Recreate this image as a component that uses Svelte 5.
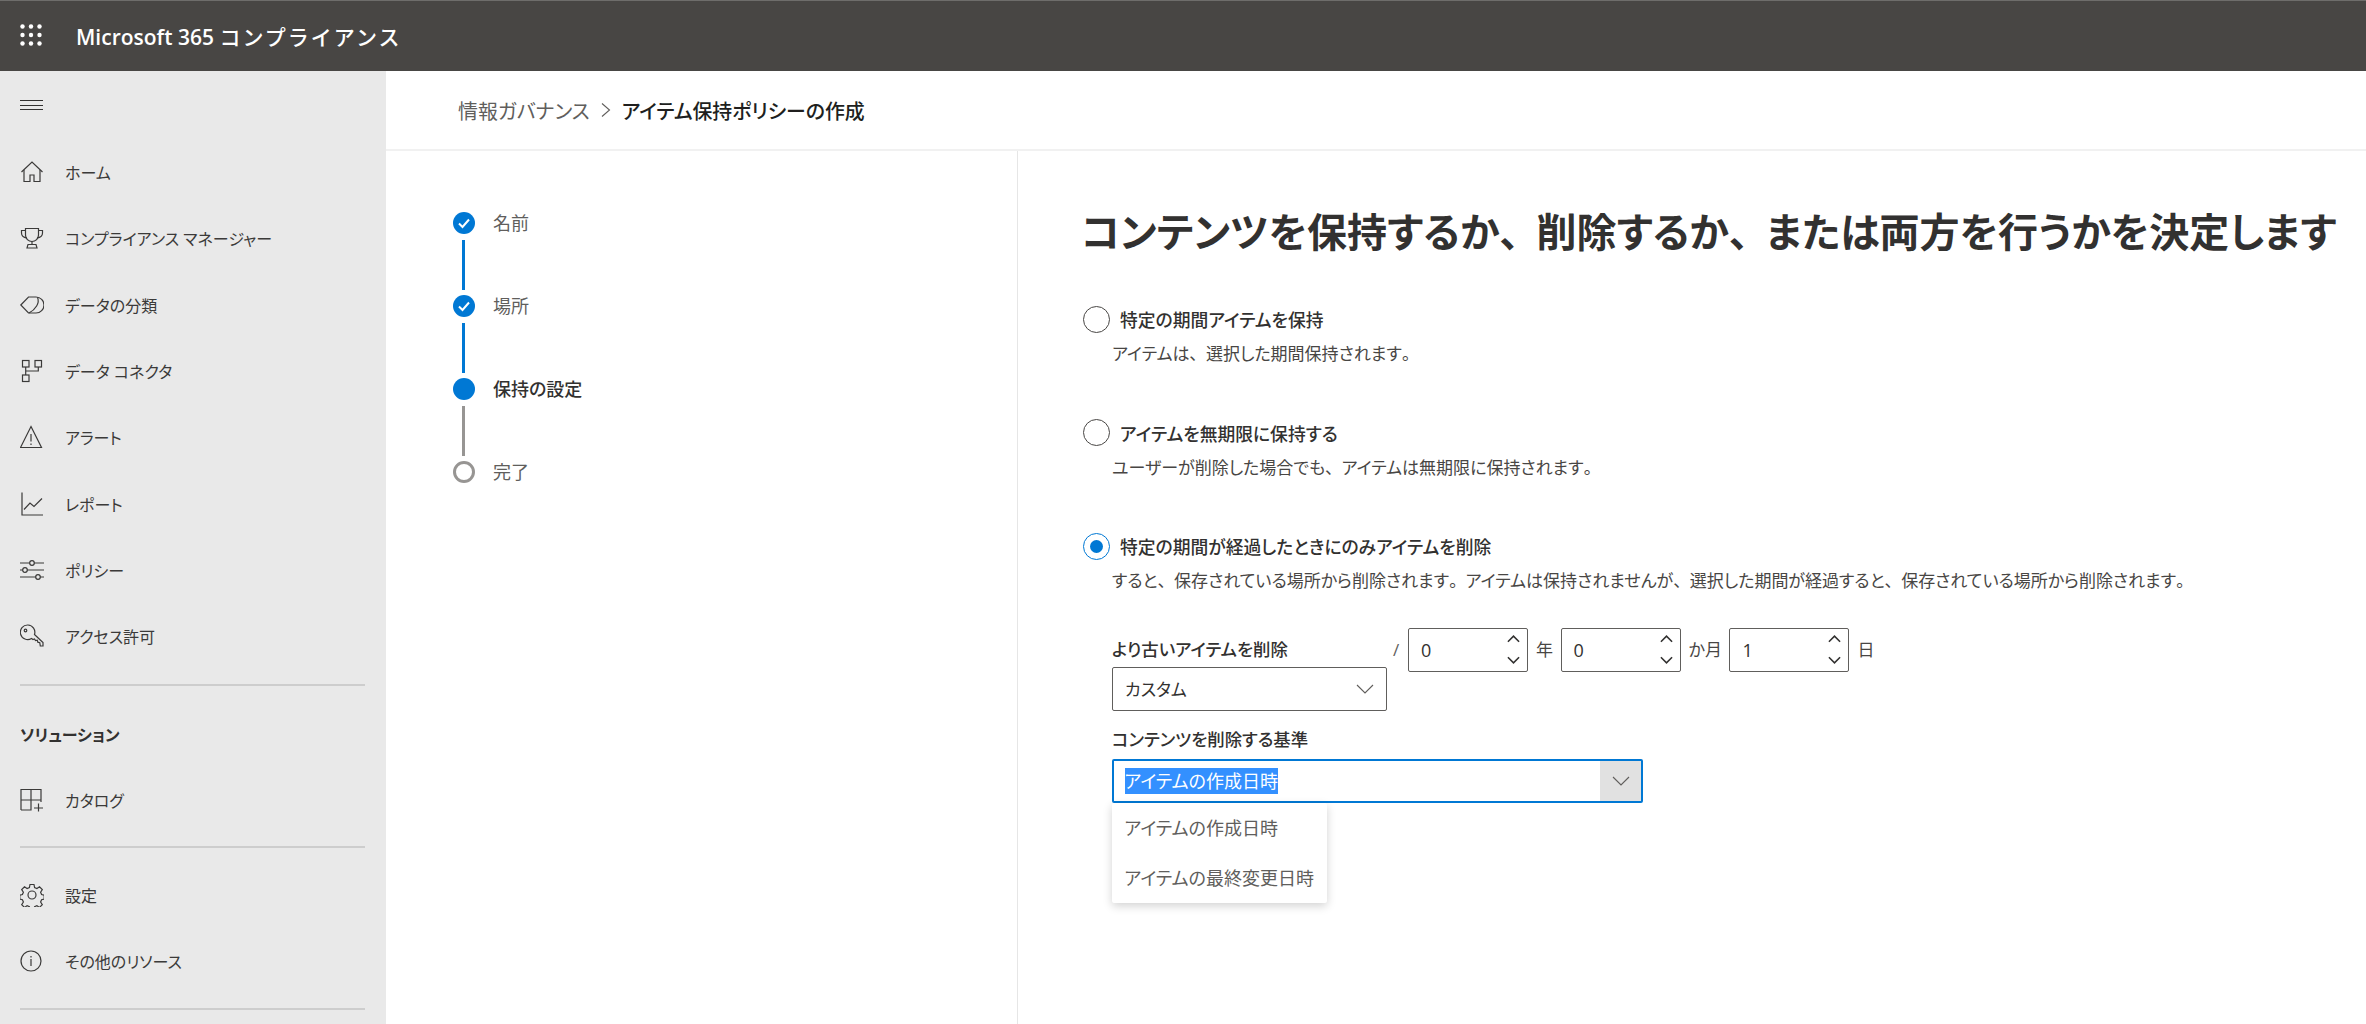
<script>
  const stroke = 'currentColor';
  const nav1 = [
    { label: 'ホーム', icon: 'home' },
    { label: 'コンプライアンス マネージャー', icon: 'trophy' },
    { label: 'データの分類', icon: 'tag' },
    { label: 'データ コネクタ', icon: 'conn' },
    { label: 'アラート', icon: 'alert' },
    { label: 'レポート', icon: 'chart' },
    { label: 'ポリシー', icon: 'sliders' },
    { label: 'アクセス許可', icon: 'key' }
  ];
  const nav2 = [{ label: '設定', icon: 'gear' }, { label: 'その他のリソース', icon: 'info' }];
  const steps = [
    { label: '名前', state: 'done' },
    { label: '場所', state: 'done' },
    { label: '保持の設定', state: 'current' },
    { label: '完了', state: 'todo' }
  ];
  const options = [
    { title: '特定の期間アイテムを保持', desc: 'アイテムは、選択した期間保持されます。', on: false },
    { title: 'アイテムを無期限に保持する', desc: 'ユーザーが削除した場合でも、アイテムは無期限に保持されます。', on: false },
    { title: '特定の期間が経過したときにのみアイテムを削除', desc: 'すると、保存されている場所から削除されます。アイテムは保持されませんが、選択した期間が経過すると、保存されている場所から削除されます。', on: true }
  ];
  const spins = [
    { v: '0', unit: '年' },
    { v: '0', unit: 'か月' },
    { v: '1', unit: '日' }
  ];
  const marks = (t) => t.split(/([、。])/).filter(Boolean);
  const isMark = (p) => p === '、' || p === '。';
</script>

{#snippet icon(name)}
  <svg class="ico" width="24" height="24" viewBox="0 0 24 24" fill="none" stroke={stroke} stroke-width="1.2">
    {#if name === 'home'}
      <path d="M1.500 12 12 2l10.500 10" /><path d="M4 10v11.500h6V15h4v6.500h6V10" />
    {:else if name === 'trophy'}
      <path d="M5.500 2.500h13v6.500a6.500 6.500 0 0 1-13 0z" /><path d="M5.500 4.500H1.500v2.500c0 2.500 2 4.500 5.500 5M18.500 4.500h4v2.500c0 2.500-2 4.500-5.500 5" /><path d="M12 15.500v3M8 18.500h8l1 3.500H7z" />
    {:else if name === 'tag'}
      <path d="M.8 12 8.500 4H16a8 8 0 0 1 0 16H8.500z" /><path d="M17.500 4.200C20 10 15.500 16.500 9 20" />
    {:else if name === 'conn'}
      <rect x="2.500" y="1.500" width="6.500" height="6.500" /><rect x="15" y="1.500" width="6.500" height="6.500" /><rect x="2.500" y="16" width="6.500" height="6.500" /><path d="M5.700 8v8M5.700 12h12.600V8" />
    {:else if name === 'alert'}
      <path d="M11 1.500 21.500 22.500H.5z" /><path d="M11 9v7.500M11 18.500v1.500" />
    {:else if name === 'chart'}
      <path d="M2 .500V23h21" /><path d="M4 17.500l6-6.500 4 3.500 8-8" />
    {:else if name === 'sliders'}
      <path d="M0 5h24M0 12h24M0 19h24" /><circle cx="12" cy="5" r="2.300" fill="#e9e9e9" /><circle cx="5" cy="12" r="2.300" fill="#e9e9e9" /><circle cx="18" cy="19" r="2.300" fill="#e9e9e9" />
    {:else if name === 'key'}
      <path d="M8 1a7.300 7.300 0 1 0 3.500 13.500l1.500 1 1.500-.500 1 1.500 1.800-.300.500 2 2 .500.500 3.300h2.700v-3.500l-8.500-8A7.300 7.300 0 0 0 8 1z" /><circle cx="5.500" cy="6.500" r="1.300" />
    {:else if name === 'grid'}
      <path d="M1 22V1.500h20V14M11 1.500V22H1M1 12h20M14 20h9M18.500 15.500v8" />
    {:else if name === 'gear'}
      <path d="M10 1.500h4l.6 3 2.300 1 2.600-1.700 2.800 2.800-1.700 2.600 1 2.300 2.600.6v4l-2.600.6-1 2.300 1.700 2.600-2.800 2.800-2.600-1.700-2.300 1-.6 2.600h-4l-.6-2.600-2.300-1-2.600 1.700-2.800-2.800 1.700-2.600-1-2.300-2.600-.6v-4l2.600-.6 1-2.300L1.700 6.600l2.800-2.800 2.600 1.700 2.300-1z" /><circle cx="12" cy="12" r="4" />
    {:else if name === 'info'}
      <circle cx="11" cy="12" r="10" /><path d="M11 10v7M11 7v1.500" />
    {/if}
  </svg>
{/snippet}

{#snippet text(t)}{#each marks(t) as p}{#if isMark(p)}<span class="mark">{p}</span>{:else}{p}{/if}{/each}{/snippet}

<div class="page">
  <header class="top">
    <svg class="waffle" width="22" height="22" viewBox="0 0 22 22" fill="#fff">
      {#each [2.500, 11, 19.500] as y}{#each [2.500, 11, 19.500] as x}<circle cx={x} cy={y} r="2.200" />{/each}{/each}
    </svg>
    <span class="brand">Microsoft 365 <span class="kana">コンプライアンス</span></span>
  </header>

  <div class="shell">
    <nav class="side">
      <div class="burger"><span></span><span></span><span></span></div>
      {#each nav1 as n}
        <div class="nav">{@render icon(n.icon)}<span>{n.label}</span></div>
      {/each}
      <hr class="rule first" />
      <div class="section">ソリューション</div>
      <div class="nav">{@render icon('grid')}<span>カタログ</span></div>
      <hr class="rule" />
      {#each nav2 as n}
        <div class="nav">{@render icon(n.icon)}<span>{n.label}</span></div>
      {/each}
      <hr class="rule last" />
    </nav>

    <div class="main">
      <div class="crumbs">
        <span class="c1">情報ガバナンス</span>
        <svg width="12" height="16" viewBox="0 0 12 16" fill="none" stroke="#605e5c" stroke-width="1.100"><path d="M2 1.500 9.500 8 2 14.500" /></svg>
        <span class="c2">アイテム保持ポリシーの作成</span>
      </div>

      <div class="cols">
        <aside class="wizard">
          {#each steps as s, i}
            <div class="step">
              <div class="track">
                <span class="dot {s.state}">
                  {#if s.state === 'done'}
                    <svg width="14" height="12" viewBox="0 0 14 12" fill="none" stroke="#fff" stroke-width="2"><path d="M2 6.500 5.500 10 12 2.500" /></svg>
                  {/if}
                </span>
                {#if i < steps.length - 1}
                  <span class="line" class:blue={s.state === 'done'}></span>
                {/if}
              </div>
              <span class="slabel" class:active={s.state === 'current'}>{s.label}</span>
            </div>
          {/each}
        </aside>

        <section class="form">
          <h1>{@render text('コンテンツを保持するか、削除するか、または両方を行うかを決定します')}</h1>

          {#each options as o}
            <div class="opt">
              <div class="optrow">
                <span class="radio" class:on={o.on}></span>
                <span class="otitle">{o.title}</span>
              </div>
              <p class="odesc">{@render text(o.desc)}</p>
            </div>
          {/each}

          <div class="details">
            <div class="retain">
              <div class="retain-left">
                <div class="flabel">より古いアイテムを削除</div>
                <div class="select">
                  <span>カスタム</span>
                  <svg width="18" height="10" viewBox="0 0 18 10" fill="none" stroke="#605e5c" stroke-width="1.100"><path d="M1 1l8 8 8-8" /></svg>
                </div>
              </div>
              <span class="slash">/</span>
              {#each spins as sp}
                <div class="spin">
                  <span>{sp.v}</span>
                  <div class="arrows">
                    <svg width="13" height="8" viewBox="0 0 14 8" fill="none" stroke="#323130" stroke-width="1.700"><path d="M1 7l6-6 6 6" /></svg>
                    <svg width="13" height="8" viewBox="0 0 14 8" fill="none" stroke="#323130" stroke-width="1.700"><path d="M1 1l6 6 6-6" /></svg>
                  </div>
                </div>
                <span class="unit">{sp.unit}</span>
              {/each}
            </div>

            <div class="flabel second">コンテンツを削除する基準</div>
            <div class="comboWrap">
              <div class="combo">
                <span class="sel">アイテムの作成日時</span>
                <span class="caret">
                  <svg width="18" height="10" viewBox="0 0 18 10" fill="none" stroke="#605e5c" stroke-width="1.100"><path d="M1 1l8 8 8-8" /></svg>
                </span>
              </div>
              <div class="menu">
                <div>アイテムの作成日時</div>
                <div>アイテムの最終変更日時</div>
              </div>
            </div>
          </div>
        </section>
      </div>
    </div>
  </div>
</div>

<style>
  :global(body) { margin: 0; background: #fff; }
  .page {
    width: 2366px; height: 1024px; overflow: hidden; display: flex; flex-direction: column;
    font-family: "Open Sans", "Noto Sans CJK JP", sans-serif;
    font-feature-settings: "palt";
    font-size: 16px; color: #323130;
  }
  .top {
    height: 70px; flex: none; background: #484644; border-top: 1px solid #6e6d6b;
    display: flex; align-items: center; padding-left: 20px; color: #fff;
  }
  .waffle { margin: -2px 34px 0 0; }
  .brand { font-size: 21px; font-weight: 600; white-space: nowrap; }
  .kana { font-feature-settings: normal; letter-spacing: 2px; font-weight: 500; }
  .shell { flex: 1; display: flex; min-height: 0; }
  .side { width: 386px; flex: none; background: #e9e9e9; padding: 0 21px 0 20px; box-sizing: border-box; }
  .burger { height: 68px; display: flex; flex-direction: column; justify-content: center; gap: 3.500px; }
  .burger span { display: block; width: 23px; height: 1px; background: #323130; }
  .nav { height: 66.300px; display: flex; align-items: center; gap: 21px; color: #3b3a39; white-space: nowrap; }
  .ico { flex: none; color: #3b3a39; }
  .rule { border: 0; border-top: 2px solid #cdcdcd; margin: 0; }
  .rule.first { margin-top: 14.500px; }
  .section { font-weight: 700; margin-top: 18px; line-height: 62px; height: 62.500px; }
  .rule:not(.first):not(.last) { margin-top: 13px; margin-bottom: 14px; }
  .rule.last { margin-top: 14px; }
  .main { flex: 1; display: flex; flex-direction: column; min-width: 0; }
  .crumbs {
    height: 78px; flex: none; border-bottom: 2px solid #f1f1f1; display: flex; align-items: center;
    padding-left: 72px; font-size: 19.900px; gap: 10px;
  }
  .c1 { color: #605e5c; }
  .c2 { font-weight: 500; color: #201f1e; }
  .cols { flex: 1; display: flex; min-height: 0; }
  .wizard { width: 632px; flex: none; box-sizing: border-box; border-right: 1px solid #e6e6e6; padding: 61px 0 0 66px; }
  .step { display: flex; gap: 18px; height: 83px; }
  .track { width: 23px; display: flex; flex-direction: column; align-items: center; }
  .dot { width: 22px; height: 22px; border-radius: 50%; box-sizing: border-box; flex: none; display: flex; align-items: center; justify-content: center; }
  .dot.done, .dot.current { background: #0078d4; }
  .dot.todo { border: 3px solid #979593; }
  .line { width: 2.500px; height: 50px; margin-top: 6px; background: #979593; }
  .line.blue { background: #0078d4; }
  .slabel { color: #605e5c; line-height: 22px; font-size: 18px; }
  .slabel.active { color: #323130; font-weight: 500; }
  .form { flex: 1; padding: 50px 0 0 63px; min-width: 0; }
  h1 { margin: 0 0 42px; font-size: 40px; font-weight: 700; line-height: 62px; color: #323130; white-space: nowrap; }
  h1 .mark { letter-spacing: 17px; }
  .opt { height: 113.500px; }
  .optrow { display: flex; align-items: center; gap: 10px; height: 28px; padding-left: 2px; }
  .radio { width: 27px; height: 27px; border-radius: 50%; border: 1px solid #484644; box-sizing: border-box; background: #fff; flex: none; position: relative; }
  .radio.on { border-color: #0078d4; }
  .radio.on::after { content: ""; position: absolute; left: 6px; top: 6px; width: 13px; height: 13px; border-radius: 50%; background: #0078d4; }
  .otitle { font-weight: 500; color: #323130; font-size: 17.800px; }
  .odesc { margin: 9px 0 0 31px; line-height: 24px; color: #484644; white-space: nowrap; font-size: 17px; }
  .mark { letter-spacing: 8px; }
  .details { margin: -18px 0 0 31px; }
  .retain { display: flex; align-items: flex-start; }
  .retain-left { width: 275px; padding-top: 6px; }
  .flabel { font-weight: 500; line-height: 30px; font-size: 17.400px; }
  .second { margin-top: 13px; }
  .select, .spin {
    border: 1px solid #605e5c; border-radius: 2px; box-sizing: border-box; background: #fff;
    display: flex; align-items: center; justify-content: space-between;
  }
  .select { height: 44px; padding: 0 12px; margin-top: 3px; font-size: 17px; }
  .slash { margin: 6px 0 0 6px; width: 15px; line-height: 32px; color: #605e5c; font-size: 17px; }
  .spin { width: 120px; height: 44px; padding: 0 7px 0 12px; font-size: 18px; }
  .arrows { display: flex; flex-direction: column; gap: 13px; }
  .arrows svg { display: block; }
  .unit { margin: 0 7.500px 0 8px; line-height: 44px; color: #484644; font-size: 17px; }
  .comboWrap { position: relative; margin-top: 5px; width: 531px; font-size: 18px; }
  .combo {
    height: 44px; box-sizing: border-box; border: 2.500px solid #0078d4; border-radius: 2px;
    display: flex; align-items: center; justify-content: space-between; padding-left: 10.500px;
  }
  .sel { background: #3390ff; color: #fff; line-height: 26px; }
  .caret { width: 41px; align-self: stretch; background: #e1e1e1; display: flex; align-items: center; justify-content: center; }
  .menu {
    position: absolute; top: 44px; left: 0; width: 215px; height: 100px; background: #fff; border-radius: 2px;
    box-shadow: 0 3px 10px rgba(0, 0, 0, .18); color: #605e5c; box-sizing: border-box; padding: 0 12.500px;
  }
  .menu div { height: 50px; line-height: 50px; white-space: nowrap; }
</style>
